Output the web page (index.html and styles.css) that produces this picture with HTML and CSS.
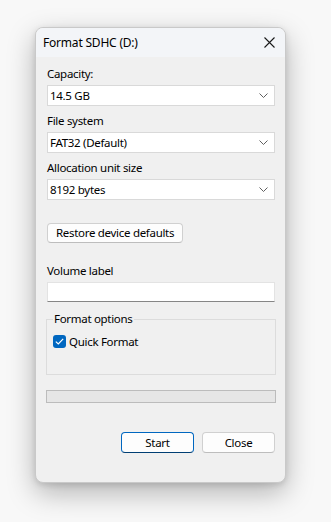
FILE: index.html
```html
<!DOCTYPE html>
<html lang="en">
<head>
    <meta charset="UTF-8">
    <meta name="viewport" content="width=device-width, initial-scale=1.0">
    <title>Format SDHC (D:)</title>
    <link rel="stylesheet" href="styles.css">
</head>
<body>
    <div class="desktop">
        <div class="dialog">
            <div class="titlebar">
                <span class="title">Format SDHC (D:)</span>
                <button class="close-x" aria-label="Close">
                    <svg width="11" height="11" viewBox="0 0 11 11">
                        <path d="M0.5 0.5 L10.5 10.5 M10.5 0.5 L0.5 10.5" stroke="#1a1a1a" stroke-width="1.1" fill="none"/>
                    </svg>
                </button>
            </div>

            <div class="dialog-body">
                <div class="field">
                    <div class="field-label">Capacity:</div>
                    <div class="combo">
                        <span>14.5 GB</span>
                        <svg class="chevron" width="9" height="5" viewBox="0 0 9 5"><path d="M0.5 0.5 L4.5 4.5 L8.5 0.5" stroke="#606060" fill="none"/></svg>
                    </div>
                </div>
                <div class="field">
                    <div class="field-label">File system</div>
                    <div class="combo">
                        <span>FAT32 (Default)</span>
                        <svg class="chevron" width="9" height="5" viewBox="0 0 9 5"><path d="M0.5 0.5 L4.5 4.5 L8.5 0.5" stroke="#606060" fill="none"/></svg>
                    </div>
                </div>
                <div class="field">
                    <div class="field-label">Allocation unit size</div>
                    <div class="combo">
                        <span>8192 bytes</span>
                        <svg class="chevron" width="9" height="5" viewBox="0 0 9 5"><path d="M0.5 0.5 L4.5 4.5 L8.5 0.5" stroke="#606060" fill="none"/></svg>
                    </div>
                </div>

                <div class="restore-row">
                    <button class="btn">Restore device defaults</button>
                </div>

                <div class="field volume">
                    <div class="field-label">Volume label</div>
                    <div class="textbox"></div>
                </div>

                <fieldset class="group">
                    <legend>Format options</legend>
                    <label class="check">
                        <span class="check-box">
                            <svg width="9" height="7" viewBox="0 0 9 7"><path d="M0.8 3.6 L3.3 6 L8.2 0.9" stroke="#ffffff" stroke-width="1.2" fill="none"/></svg>
                        </span>
                        Quick Format
                    </label>
                </fieldset>

                <div class="progress"></div>

                <div class="actions">
                    <button class="btn btn-primary">Start</button>
                    <button class="btn">Close</button>
                </div>
            </div>
        </div>
    </div>
</body>
</html>
```

FILE: styles.css
```css
* {
    box-sizing: border-box;
    margin: 0;
    padding: 0;
}

body {
    font-family: "Noto Sans", sans-serif;
    font-size: 11.5px;
    letter-spacing: -0.3px;
    color: #000;
    background: #f8f8f8;
    height: 522px;
    overflow: hidden;
}

.desktop {
    padding: 27px 0 0 35px;
}

/* 对话框窗口 */
.dialog {
    width: 251px;
    background: #f0f0f0;
    border: 1px solid #c9c9c9;
    border-radius: 8px;
    box-shadow: 0 10px 28px rgba(0, 0, 0, 0.28), 0 2px 6px rgba(0, 0, 0, 0.12);
    overflow: hidden;
}

.titlebar {
    height: 29px;
    display: flex;
    align-items: center;
    justify-content: space-between;
    padding: 0 10px 0 7px;
    background: #f3f5f8;
}

.title {
    font-size: 12px;
    letter-spacing: -0.2px;
    line-height: 16px;
}

.close-x {
    border: none;
    background: none;
    display: flex;
    align-items: center;
    justify-content: center;
    width: 11px;
    height: 11px;
}

.dialog-body {
    padding: 9px 10px 29px 11px;
}

/* 字段 */
.field + .field {
    margin-top: 7px;
}

.field-label {
    line-height: 16px;
    height: 16px;
    margin-bottom: 3px;
}

.combo {
    height: 21px;
    background: #fff;
    border: 1px solid #d9d9d9;
    display: flex;
    align-items: center;
    justify-content: space-between;
    padding: 0 6px 0 2px;
    line-height: 16px;
}

.chevron {
    display: block;
}

.restore-row {
    margin-top: 23px;
}

.btn {
    font-family: inherit;
    font-size: inherit;
    letter-spacing: inherit;
    color: #000;
    height: 20px;
    padding: 0 8px;
    background: #fdfdfd;
    border: 1px solid #d0d0d0;
    border-bottom-color: #bdbdbd;
    border-radius: 4px;
    line-height: 16px;
}

.field.volume {
    margin-top: 20px;
}

.textbox {
    height: 20px;
    background: #fff;
    border: 1px solid #e3e3e3;
    border-bottom: 1px solid #868686;
}

/* 分组框 */
.group {
    margin: 9px -1px 0;
    border: 1px solid #dcdcdc;
    padding: 8px 6px 26px;
    min-inline-size: auto;
}

.group legend {
    padding: 0 1px;
    line-height: 16px;
}

.check {
    display: flex;
    align-items: center;
    gap: 3px;
    height: 13px;
    line-height: 16px;
}

.check-box {
    width: 13px;
    height: 13px;
    border-radius: 3px;
    background: #0067c0;
    display: flex;
    align-items: center;
    justify-content: center;
}

.progress {
    margin: 15px -1px 0;
    height: 13px;
    background: #e6e6e6;
    border: 1px solid #bcbcbc;
}

.actions {
    margin-top: 29px;
    display: flex;
    justify-content: flex-end;
    gap: 8px;
}

.actions .btn {
    width: 73px;
    height: 21px;
}

.btn-primary {
    border-color: #0067c0;
    border-bottom-color: #003e73;
}
```
